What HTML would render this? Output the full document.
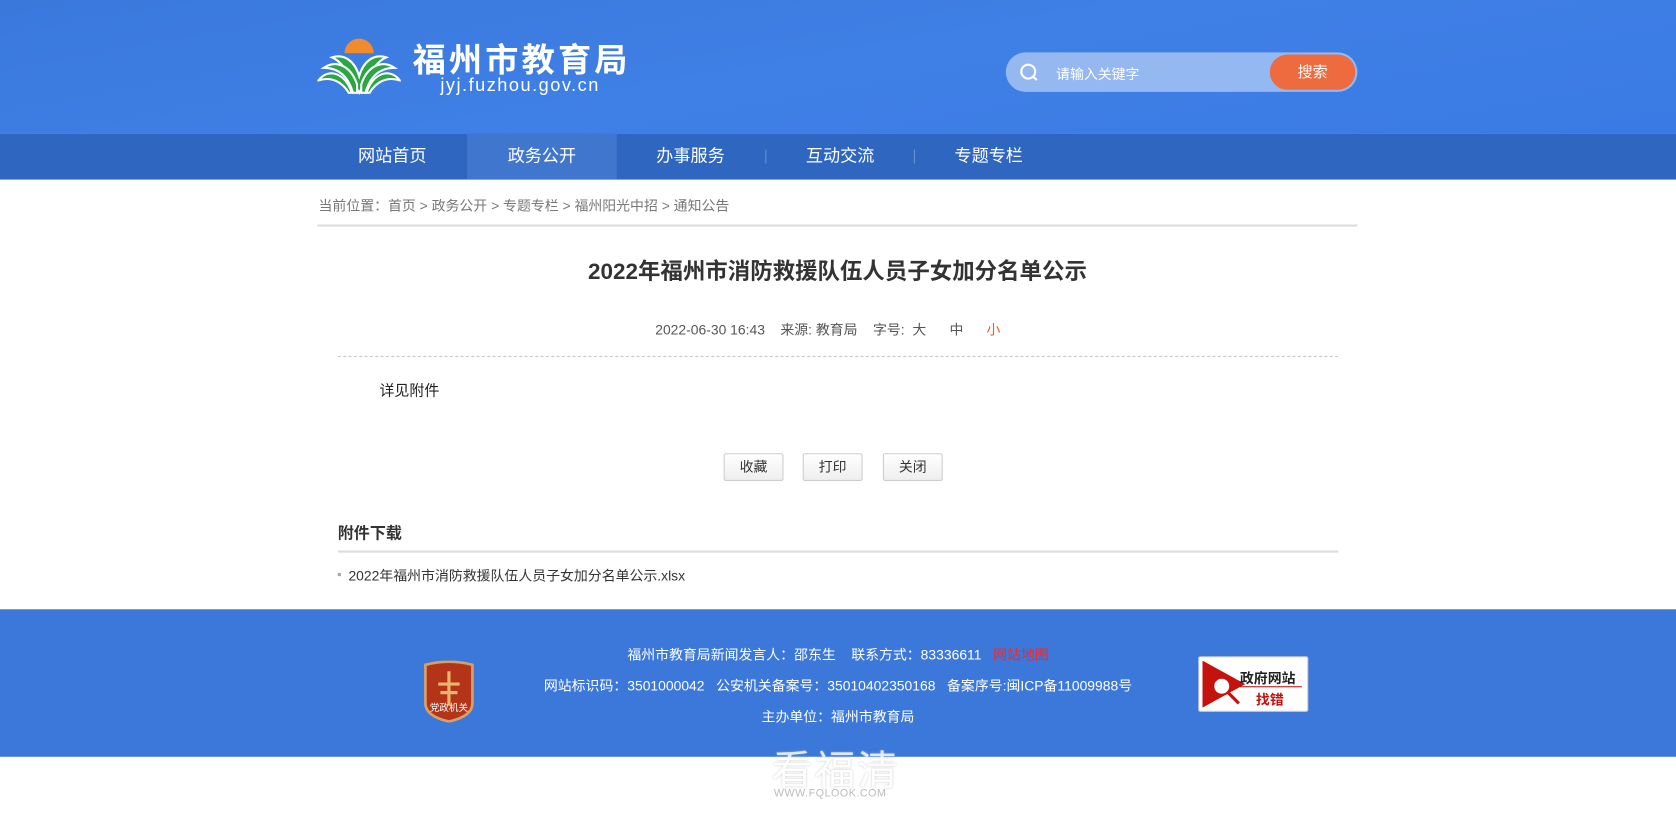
<!DOCTYPE html>
<html><head><meta charset="utf-8"><style>
*{margin:0;padding:0;box-sizing:border-box}
html,body{width:1676px;height:821px;overflow:hidden;background:#fff}
body{font-family:"Liberation Sans","Noto Sans CJK SC",sans-serif;color:#333}
#w{position:absolute;left:0;top:0;width:1568px;height:768px;transform:scale(1.06888);transform-origin:0 0}
.hdr{position:absolute;left:0;top:0;width:1568px;height:125px;background:linear-gradient(170deg,#3a78dc 0%,#3f80e6 50%,#3a7ae4 100%)}
.nav{position:absolute;left:0;top:125px;width:1568px;height:43px;background:#2f66c0}
.nav div{position:absolute;top:0;width:140px;height:43px;line-height:43px;text-align:center;color:#fff;font-size:16px}
.sep{position:absolute;top:140px;width:1px;height:13px;background:#6d93d3}
.abs{position:absolute}
</style></head><body><div id="w">
<div class="hdr"></div>
<svg class="abs" style="left:297px;top:34px" width="78" height="55" viewBox="0 0 80 56">
<path d="M26 16 A14 14 0 0 1 54 16 Z" fill="#f28a2e"/>
<g stroke="#fff" stroke-width="2" fill="#2aa642">
<path d="M40 54 C30 36 24 24 14 20 C26 16 36 24 40 38 C44 24 54 16 66 20 C56 24 50 36 40 54Z"/>
<path d="M34 54 C30 40 22 30 6 30 C18 22 32 28 38 46 L38 54Z"/>
<path d="M46 54 C50 40 58 30 74 30 C62 22 48 28 42 46 L42 54Z"/>
<path d="M30 54 C24 44 14 38 1 42 C10 30 26 34 33 54Z"/>
<path d="M50 54 C56 44 66 38 79 42 C70 30 54 34 47 54Z"/>
</g>
</svg>
<div class="abs" style="left:386px;top:31px;color:#fff;font-size:31px;font-weight:bold;letter-spacing:3px">福州市教育局</div>
<div class="abs" style="left:412px;top:70px;color:#fff;font-size:17px;letter-spacing:1.4px">jyj.fuzhou.gov.cn</div>
<div class="abs" style="left:941px;top:49px;width:329px;height:37px;border-radius:19px;background:rgba(255,255,255,0.45)"></div>
<svg class="abs" style="left:954px;top:59px" width="18" height="18"><circle cx="8" cy="8" r="6.5" fill="none" stroke="#fff" stroke-width="2"/><path d="M13 13 L16 16" stroke="#fff" stroke-width="2"/></svg>
<div class="abs" style="left:988px;top:59px;color:#fff;font-size:13px">请输入关键字</div>
<div class="abs" style="left:1188px;top:51px;width:80px;height:33px;border-radius:17px;background:#ee6a3f;color:#fff;font-size:14px;line-height:33px;text-align:center">搜索</div>
<div class="nav">
<div style="left:297px">网站首页</div>
<div style="left:437px;background:#4176cf">政务公开</div>
<div style="left:576px">办事服务</div>
<div style="left:716px">互动交流</div>
<div style="left:855px">专题专栏</div>
</div>
<div class="sep" style="left:716px"></div><div class="sep" style="left:855px"></div>
<div class="abs" style="left:298px;top:182px;font-size:13px;color:#777">当前位置：首页 &gt; 政务公开 &gt; 专题专栏 &gt; 福州阳光中招 &gt; 通知公告</div>
<div class="abs" style="left:297px;top:210px;width:973px;height:2px;background:#ddd"></div>
<div class="abs" style="left:297px;top:238px;width:973px;text-align:center;font-size:21px;font-weight:bold;color:#333">2022年福州市消防救援队伍人员子女加分名单公示</div>
<div class="abs" style="left:613px;top:298px;font-size:13px;color:#555">2022-06-30 16:43&nbsp;&nbsp;&nbsp;&nbsp;来源: 教育局&nbsp;&nbsp;&nbsp;&nbsp;字号:&nbsp;&nbsp;大&nbsp;&nbsp;&nbsp;&nbsp;&nbsp;&nbsp;中&nbsp;&nbsp;&nbsp;&nbsp;&nbsp;&nbsp;<span style="color:#f05a22">小</span></div>
<div class="abs" style="left:316px;top:333px;width:936px;border-top:1px dashed #ccc"></div>
<div class="abs" style="left:355px;top:355px;font-size:14px;color:#222">详见附件</div>
<div class="abs" style="left:677px;top:424px;width:56px;height:26px;border:1px solid #ccc;border-radius:2px;background:linear-gradient(#fff,#eee);font-size:13px;text-align:center;line-height:24px">收藏</div>
<div class="abs" style="left:751px;top:424px;width:56px;height:26px;border:1px solid #ccc;border-radius:2px;background:linear-gradient(#fff,#eee);font-size:13px;text-align:center;line-height:24px">打印</div>
<div class="abs" style="left:826px;top:424px;width:56px;height:26px;border:1px solid #ccc;border-radius:2px;background:linear-gradient(#fff,#eee);font-size:13px;text-align:center;line-height:24px">关闭</div>
<div class="abs" style="left:316px;top:488px;font-size:15px;font-weight:bold;color:#333">附件下载</div>
<div class="abs" style="left:316px;top:515px;width:936px;height:2px;background:#ddd"></div>
<div class="abs" style="left:316px;top:536px;width:3px;height:3px;background:#aaa"></div>
<div class="abs" style="left:326px;top:528px;font-size:13px;color:#333">2022年福州市消防救援队伍人员子女加分名单公示.xlsx</div>
<div class="abs" style="left:0;top:570px;width:1568px;height:138px;background:#3b78d9"></div>
<svg class="abs" style="left:396px;top:618px" width="48" height="58" viewBox="0 0 48 58"><path d="M2 4 Q24 -2 46 4 L46 40 Q46 52 24 57 Q2 52 2 40Z" fill="#b33418" stroke="#d9a066" stroke-width="2.5"/><path d="M24 10 V42 M14 22 H34 M16 30 H32" stroke="#e8b56f" stroke-width="3"/><text x="24" y="47" font-size="9" fill="#fff" text-anchor="middle" font-family="Noto Sans CJK SC">党政机关</text></svg>
<div class="abs" style="left:0;top:598px;width:1568px;text-align:center;font-size:13px;color:#fff;line-height:29px">
福州市教育局新闻发言人：邵东生&nbsp;&nbsp;&nbsp;&nbsp;联系方式：83336611&nbsp;&nbsp;&nbsp;<span style="color:#f22">网站地图</span><br>
网站标识码：3501000042&nbsp;&nbsp;&nbsp;公安机关备案号：35010402350168&nbsp;&nbsp;&nbsp;备案序号:闽ICP备11009988号<br>主办单位：福州市教育局</div>
<div class="abs" style="left:1121px;top:614px;width:103px;height:52px;background:#fff;border:1px solid #ccc;border-radius:2px"></div>
<svg class="abs" style="left:1125px;top:618px" width="40" height="44"><path d="M0 0 L40 22 L0 44Z" fill="#c4120d"/><circle cx="18" cy="24" r="8" fill="#fff" stroke="#c4120d" stroke-width="2"/><path d="M24 30 L34 40" stroke="#c4120d" stroke-width="3"/></svg>
<div class="abs" style="left:1160px;top:624px;font-size:13px;color:#222;font-weight:bold">政府网站</div>
<div class="abs" style="left:1160px;top:642px;width:58px;height:1px;background:#c4120d"></div>
<div class="abs" style="left:1175px;top:644px;font-size:13px;color:#c4120d;font-weight:bold">找错</div>
<div class="abs" style="left:722px;top:690px;font-size:38px;color:#fff;opacity:0.85;text-shadow:0 0 2px #bbb;letter-spacing:2px">看福清</div>
<div class="abs" style="left:724px;top:737px;font-size:10px;color:#bbb;letter-spacing:0.5px">WWW.FQLOOK.COM</div>
</div></body></html>
